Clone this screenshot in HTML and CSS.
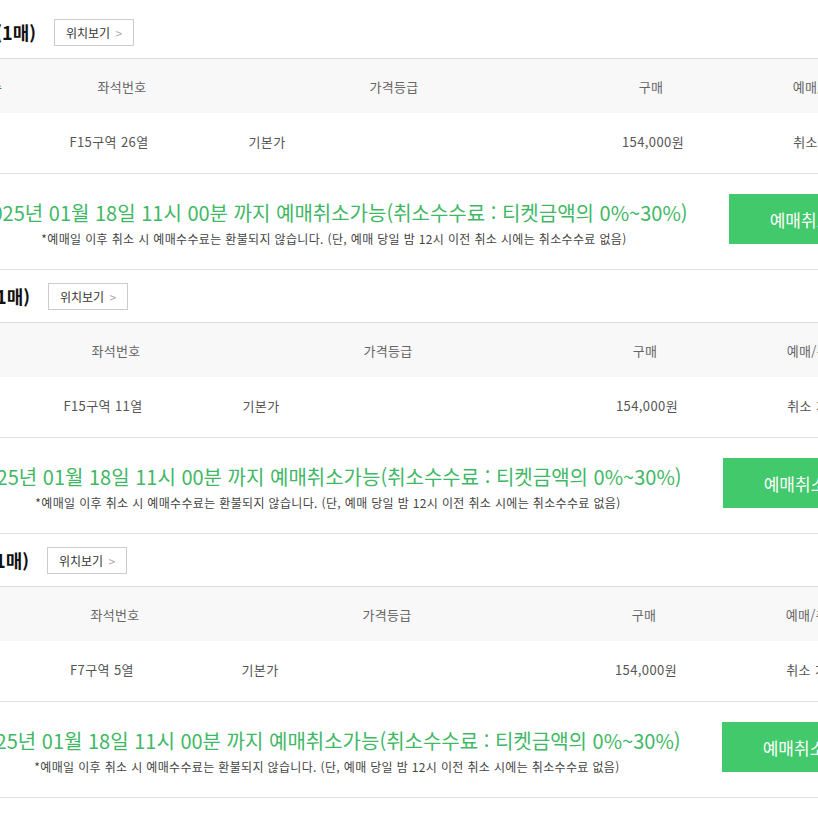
FILE: index.html
```html
<!DOCTYPE html>
<html lang="ko">

<head>
    <meta charset="UTF-8">
    <meta name="viewport" content="width=device-width, initial-scale=1.0">
    <title>예매확인</title>
    <link rel="stylesheet" href="styles.css">
</head>

<body>
    <div class="list">
        <!-- 첫번째 티켓 -->
        <div class="ticket">
            <div class="ticket-head">
                <h3 class="title">선택좌석 (1매)</h3>
                <button class="btn-seat">위치보기 <span>&gt;</span></button>
            </div>
            <div class="row-th">
                <div>매수</div>
                <div>좌석번호</div>
                <div>가격등급</div>
                <div>구매</div>
                <div>예매/취소</div>
            </div>
            <div class="row-td">
                <div>1매</div>
                <div>F15구역 26열</div>
                <div>기본가</div>
                <div></div>
                <div>154,000원</div>
                <div>취소 가능</div>
                <div></div>
            </div>
            <div class="row-cancel">
                <div class="cancel-info">
                    <p class="cancel-date">2025년 01월 18일 11시 00분 까지 예매취소가능(취소수수료 : 티켓금액의 0%~30%)</p>
                    <p class="cancel-note">*예매일 이후 취소 시 예매수수료는 환불되지 않습니다. (단, 예매 당일 밤 12시 이전 취소 시에는 취소수수료 없음)</p>
                </div>
                <button class="btn-cancel">예매취소</button>
            </div>
        </div>

        <!-- 두번째 티켓 -->
        <div class="ticket shift6">
            <div class="ticket-head">
                <h3 class="title">선택좌석 (1매)</h3>
                <button class="btn-seat">위치보기 <span>&gt;</span></button>
            </div>
            <div class="row-th">
                <div>매수</div>
                <div>좌석번호</div>
                <div>가격등급</div>
                <div>구매</div>
                <div>예매/취소</div>
            </div>
            <div class="row-td">
                <div>1매</div>
                <div>F15구역 11열</div>
                <div>기본가</div>
                <div></div>
                <div>154,000원</div>
                <div>취소 가능</div>
                <div></div>
            </div>
            <div class="row-cancel">
                <div class="cancel-info">
                    <p class="cancel-date">2025년 01월 18일 11시 00분 까지 예매취소가능(취소수수료 : 티켓금액의 0%~30%)</p>
                    <p class="cancel-note">*예매일 이후 취소 시 예매수수료는 환불되지 않습니다. (단, 예매 당일 밤 12시 이전 취소 시에는 취소수수료 없음)</p>
                </div>
                <button class="btn-cancel">예매취소</button>
            </div>
        </div>

        <!-- 세번째 티켓 -->
        <div class="ticket shift7">
            <div class="ticket-head">
                <h3 class="title">선택좌석 (1매)</h3>
                <button class="btn-seat">위치보기 <span>&gt;</span></button>
            </div>
            <div class="row-th">
                <div>매수</div>
                <div>좌석번호</div>
                <div>가격등급</div>
                <div>구매</div>
                <div>예매/취소</div>
            </div>
            <div class="row-td">
                <div>1매</div>
                <div>F7구역 5열</div>
                <div>기본가</div>
                <div></div>
                <div>154,000원</div>
                <div>취소 가능</div>
                <div></div>
            </div>
            <div class="row-cancel">
                <div class="cancel-info">
                    <p class="cancel-date">2025년 01월 18일 11시 00분 까지 예매취소가능(취소수수료 : 티켓금액의 0%~30%)</p>
                    <p class="cancel-note">*예매일 이후 취소 시 예매수수료는 환불되지 않습니다. (단, 예매 당일 밤 12시 이전 취소 시에는 취소수수료 없음)</p>
                </div>
                <button class="btn-cancel">예매취소</button>
            </div>
        </div>
    </div>
</body>

</html>
```

FILE: styles.css
```css
* {
    margin: 0;
    padding: 0;
    box-sizing: border-box;
}

body {
    overflow: hidden;
    background-color: #fff;
    font-family: "Noto Sans CJK KR", "Noto Sans", sans-serif;
    color: #333;
}

.list {
    padding-top: 6px;
}

.ticket {
    width: 1062px;
    margin-left: -100px;
}

.ticket.shift6 {
    margin-left: -106px;
}

.ticket.shift7 {
    margin-left: -107px;
}

/* 제목 + 위치보기 */
.ticket-head {
    height: 52px;
    display: flex;
    align-items: center;
}

.title {
    width: 136px;
    text-align: right;
    font-size: 18px;
    font-weight: bold;
    color: #111;
    white-space: nowrap;
    overflow: hidden;
}

.btn-seat {
    margin-left: 18px;
    width: 80px;
    height: 27px;
    border: 1px solid #ccc;
    background-color: #fff;
    font: 12px "Noto Sans CJK KR", sans-serif;
    color: #333;
}

.btn-seat span {
    color: #aaa;
    margin-left: 2px;
}

/* 표 머리 */
.row-th {
    height: 55px;
    border-top: 1px solid #ddd;
    background-color: #f8f8f8;
    display: grid;
    grid-template-columns: 180px 84px 460px 54px 284px;
    align-items: center;
    text-align: center;
    font-size: 13px;
    letter-spacing: 0.3px;
    color: #666;
    white-space: nowrap;
}

.row-td {
    height: 60px;
    padding-bottom: 3px;
    display: grid;
    grid-template-columns: 140px 138px 178px 232px 130px 204px 40px;
    align-items: center;
    text-align: center;
    font-size: 13px;
    letter-spacing: 0.4px;
    color: #555;
    white-space: nowrap;
}

/* 취소 안내 */
.row-cancel {
    height: 97px;
    border-top: 1px solid #e2e2e2;
    border-bottom: 1px solid #e2e2e2;
    display: flex;
    align-items: flex-start;
}

.cancel-info {
    width: 829px;
    padding-left: 39px;
    margin-top: 26px;
    text-align: center;
    white-space: nowrap;
}

.cancel-date {
    font-size: 20px;
    line-height: 26px;
    color: #3fb865;
    display: flex;
    justify-content: center;
}

.cancel-note {
    margin-top: 3px;
    font-size: 12px;
    line-height: 20px;
    letter-spacing: 0.35px;
    color: #444;
    display: flex;
    justify-content: center;
}

.btn-cancel {
    margin-top: 20px;
    width: 150px;
    height: 50px;
    padding-right: 6px;
    border: none;
    background-color: #41c96b;
    color: #fff;
    font: 17px "Noto Sans CJK KR", sans-serif;
}
```
